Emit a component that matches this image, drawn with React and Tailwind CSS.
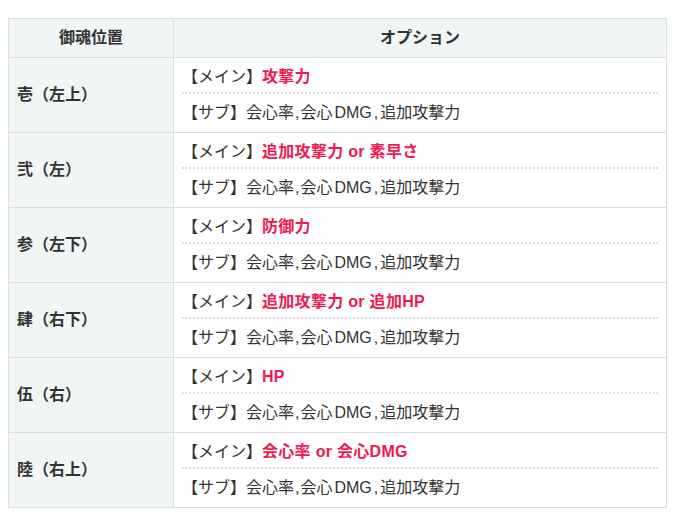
import React from 'react';

const rows = [
    { pos: '壱（左上）', main: '攻撃力' },
    { pos: '弐（左）', main: '追加攻撃力 or 素早さ' },
    { pos: '参（左下）', main: '防御力' },
    { pos: '肆（右下）', main: '追加攻撃力 or 追加HP' },
    { pos: '伍（右）', main: 'HP' },
    { pos: '陸（右上）', main: '会心率 or 会心DMG' },
];

const SubLine = () => (
    <div className="py-[8px] leading-[22px]">
        【サブ】会心率<span className="mx-px">,</span>会心<span className="ml-[2px]">DMG</span><span className="mx-[2px]">,</span>追加攻撃力
    </div>
);

const App = () => {
    return (
        <div className="bg-white min-h-[524px] pt-[18px] px-2 text-[#333] text-base" style={{ fontFamily: '"Liberation Sans", "Noto Sans CJK JP", sans-serif' }}>
            <table className="w-[659px] border-collapse border border-[#ddd]">
                <thead>
                    <tr className="bg-[#f0f5f5]">
                        <th className="w-[165px] h-[39px] border border-[#ddd] font-bold text-center">御魂位置</th>
                        <th className="h-[39px] border border-[#ddd] font-bold text-center">オプション</th>
                    </tr>
                </thead>
                <tbody>
                    {rows.map((r) => (
                        <tr key={r.pos} className="h-[75px]">
                            <td className="bg-[#f0f5f5] border border-[#ddd] px-2 font-bold">{r.pos}</td>
                            <td className="border border-[#ddd] px-2 py-0 bg-white">
                                <div className="pt-[8px] pb-[4px] leading-[22px] border-b-2 border-dotted border-[#ddd]">
                                    【メイン】<span className="font-bold text-[#f0194f] tracking-[0.3px]">{r.main}</span>
                                </div>
                                <SubLine />
                            </td>
                        </tr>
                    ))}
                </tbody>
            </table>
        </div>
    );
};

export default App;
